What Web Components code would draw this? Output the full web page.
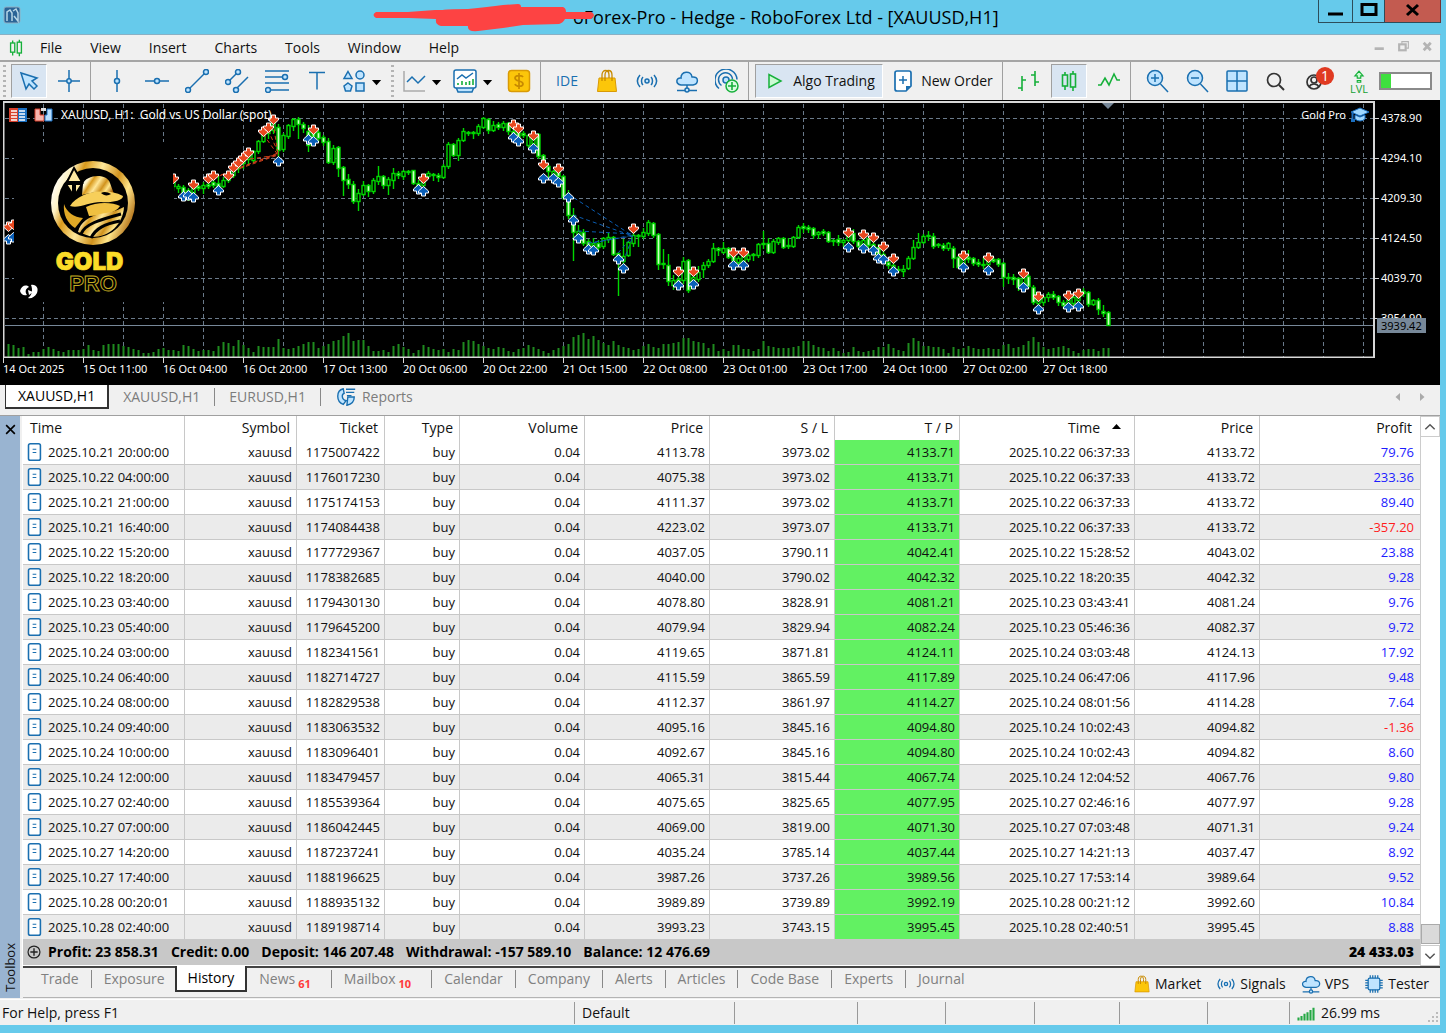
<!DOCTYPE html>
<html lang="en">
<head>
	<meta charset="utf-8">
	<title>RoboForex Ltd - [XAUUSD,H1]</title>
	<meta name="viewport" content="width=device-width">
</head>
<style type="text/css">
	body, html {
		margin:0;
		font-family:"Open Sans", "Noto Sans", sans-serif;
		font-size:14px;
		line-height:20px;
		color:#111;
		background-color:#66caeb;
	}
</style>
<body>

<terminal-window>
	<title-bar slot="title">oForex-Pro - Hedge - RoboForex Ltd - [XAUUSD,H1]</title-bar>
	<menu-bar slot="menu"></menu-bar>
	<tool-bar slot="tools"></tool-bar>
	<price-chart></price-chart>
	<chart-tabs></chart-tabs>
	<toolbox-panel>
		<history-table></history-table>
		<toolbox-tabs slot="tabs"></toolbox-tabs>
	</toolbox-panel>
	<status-bar slot="status"></status-bar>
</terminal-window>

</body>
<script type="text/javascript">

// all icons share a 24x24 box
const B = 'stroke="#1a6fb0" fill="none" stroke-width="1.5"'
const BF = 'stroke="#1a6fb0" fill="#bfe4ff" stroke-width="1.5"'
const G = 'stroke="#16b03a" fill="none" stroke-width="1.6"'
const icons = {
	app: `<rect x="4" y="4" width="16" height="16" rx="2" fill="#2a6496" stroke="#8fb0c4"/><path d="M7 18V9l3-2 2 3v8M13 8l3-2 2 4v8l-4-5" stroke="#b8d8e8" fill="none" stroke-width="1.500"/>`,
	candles: `<g ${G}><path d="M8 3v3M8 17v4M16 2v3M16 18v4"/><rect x="5.500" y="6" width="5" height="11"/><rect x="13.500" y="5" width="5" height="13"/></g>`,
	cursor: `<path d="M4 4l5 16 3-5 5 5 3-3-5-5 5-3z" ${BF}/>`,
	cross: `<path d="M12 1v9M12 14v9M1 12h9M14 12h9" ${B}/><circle cx="12" cy="12" r="2.200" ${BF}/>`,
	vline: `<path d="M12 1v9M12 14v9" ${B}/><circle cx="12" cy="12" r="2.500" ${BF}/>`,
	hline: `<path d="M0 12h9M15 12h9" ${B}/><circle cx="12" cy="12" r="2.500" ${BF}/>`,
	trend: `<path d="M4 20L20 4" ${B}/><circle cx="3" cy="21" r="2.500" ${BF}/><circle cx="21" cy="3" r="2.500" ${BF}/>`,
	channel: `<path d="M4 12L12 4M11 20L23 8" ${B}/><circle cx="3" cy="13" r="2.500" ${BF}/><circle cx="13" cy="3" r="2.500" ${BF}/><circle cx="11" cy="21" r="2.500" ${BF}/>`,
	fibo: `<path d="M0 2h24M0 8h18M0 14h24M5 21h19" ${B}/><circle cx="20" cy="8" r="2.500" ${BF}/><circle cx="3" cy="21" r="2.500" ${BF}/>`,
	text: `<path d="M4 3.500h16M12 3.500v17" ${B}/>`,
	shapes: `<g ${BF}><path d="M6 2.500l4 7H2z"/><circle cx="18" cy="6" r="4"/><path d="M6 14l4 3-1.500 5h-5L2 17z"/><rect x="14" y="14" width="8" height="8"/></g>`,
	caret: `<path d="M6.500 11h10l-5 5.500z" fill="#000"/>`,
	line: `<path d="M2 2v20h21" stroke="#aaa" fill="none" stroke-width="1.500"/><path d="M5 13l5-5 6 6 7-7" ${B}/>`,
	monitor: `<path d="M3 18h18l-2 5H5z" fill="#bfe4ff" stroke="#1a6fb0" stroke-width="1.500"/><rect x="1" y="1" width="22" height="18" rx="2" fill="#fff" stroke="#1a6fb0" stroke-width="1.500"/><path d="M4 10l5-4 4 3 7-5" ${B}/><path d="M5 16v-2M9 16v-4M13 16v-3M16.500 16v-4M20 16v-6" ${G}/>`,
	dollar: `<rect x="1.500" y="1.500" width="21" height="21" rx="3" fill="#fcc60a" stroke="#d99a05" stroke-width="1.500"/><path d="M16 8c-1-2-8-2-8 1 0 4 8 2 8 6 0 3-7 3-8 0M12 4v16" stroke="#c88a00" fill="none" stroke-width="1.700"/>`,
	bag: `<path d="M4 9h16l1.500 13.500h-19z" fill="#fcc60a" stroke="#d99a05"/><path d="M7 12V6c0-6 7-6 7 0v3M10 12V6c0-6 7-6 7 0v6" stroke="#c88a00" fill="none" stroke-width="1.300"/>`,
	signals: `<circle cx="12" cy="12" r="2" ${BF}/><path d="M8 8c-2 2-2 6 0 8M16 8c2 2 2 6 0 8M5 6c-3.500 4-3.500 8 0 12M19 6c3.500 4 3.500 8 0 12" ${B}/>`,
	cloud: `<path d="M6 16c-6-1-5-8 0-7 0-7 10-8 11-1 7-1 7 7 1 8z" ${BF}/><path d="M12 16v4M2 21.500h8M14 21.500h8" ${B}/><circle cx="12" cy="21" r="2" ${BF}/>`,
	radar: `<circle cx="11" cy="11" r="3" ${BF}/><path d="M6.500 16.500a7 7 0 1 1 11-6M4 19.500a11 11 0 1 1 18-9" ${B}/><circle cx="17" cy="17" r="6" fill="#d9fbe0" stroke="#16b03a" stroke-width="1.500"/><path d="M17 13v8M13 17h8" ${G}/>`,
	play: `<path d="M6 5.500v13L18 12z" fill="#cdfad5" stroke="#16b03a" stroke-width="1.500"/>`,
	neworder: `<path d="M6 2h12q2 0 2 2v13l-5 5H6q-2 0-2-2V4q0-2 2-2z" fill="#fff" stroke="#1a6fb0" stroke-width="1.700"/><path d="M15 22v-5h5z" fill="#1a6fb0"/><path d="M12 7v8M8 11h8" stroke="#1a6fb0" stroke-width="1.500"/>`,
	bars: `<path d="M5 7v15M1 19h4M5 11h4M18 2v15M14 6h4M18 13h4" ${G}/>`,
	zigzag: `<path d="M1 16h3l4-7 4 7 5-11 3 6h3" ${G}/>`,
	zoomin: `<circle cx="10" cy="9" r="7.500" ${BF}/><path d="M15.500 15L23 23M10 5v8M6 9h8" ${B}/>`,
	zoomout: `<circle cx="10" cy="9" r="7.500" ${BF}/><path d="M15.500 15L23 23M6 9h8" ${B}/>`,
	tiles: `<rect x="2" y="2" width="20" height="20" rx="1" ${BF}/><path d="M12 2v20M2 12h20" ${B}/>`,
	search: `<circle cx="11" cy="11" r="6.500" stroke="#333" fill="none" stroke-width="1.700"/><path d="M16 16l5 5" stroke="#333" stroke-width="2"/>`,
	person: `<g stroke="#333" fill="none" stroke-width="1.700"><circle cx="10" cy="13" r="7"/><circle cx="10" cy="11" r="3"/><path d="M5 18c2-4 8-4 10 0"/></g>`,
	level: `<path d="M12 2l7 8h-4v4H9v-4H5zM9 18h6v3H9z" stroke="#16b03a" fill="#cdfad5" stroke-width="2"/>`,
	doc: `<rect x="6" y="3" width="13" height="18" rx="2" fill="#fff" stroke="#1a6fb0" stroke-width="1.700"/><path d="M10.500 9h4M10.500 12.500h4" stroke="#1a6fb0" stroke-width="1.200"/>`,
	plus: `<circle cx="12" cy="12" r="6.500" fill="none" stroke="#222" stroke-width="1.300"/><path d="M12 8v8M8 12h8" stroke="#222" stroke-width="1.500"/>`,
	reports: `<path d="M9 3C1 5 1 17 9 20l3-4C7 15 7 9 10 8zM14 12h7c0 5-3 8-8 9z" ${BF}/><path d="M12 3.500h10M12 7h9M13 10.500h5" ${B}/>`,
	chip: `<rect x="5" y="5" width="14" height="14" rx="2" ${BF}/><path d="M7.500 5V1.500M10.500 5V1.500M13.500 5V1.500M16.500 5V1.500M7.500 22.500V19M10.500 22.500V19M13.500 22.500V19M16.500 22.500V19M5 7.500H1.500M5 10.500H1.500M5 13.500H1.500M5 16.500H1.500M22.500 7.500H19M22.500 10.500H19M22.500 13.500H19M22.500 16.500H19" ${B}/>`,
	connection: `<path d="M2 22v-4M6 22v-6M10 22v-9M14 22V11M18 22V8M22 22V5" stroke="#25a844" stroke-width="2.800"/>`,
	min: `<path d="M4 15h15" stroke="currentColor" stroke-width="3"/>`,
	max: `<rect x="5" y="5.500" width="14" height="10" fill="none" stroke="currentColor" stroke-width="3"/>`,
	restore: `<path d="M9 7V3h12v12h-4" fill="none" stroke="currentColor" stroke-width="2"/><rect x="4" y="8" width="12" height="11" fill="none" stroke="currentColor" stroke-width="4"/>`,
	close: `<path d="M6 6l11 10M17 6L6 16" stroke="currentColor" stroke-width="3"/>`,
	smallmin: `<path d="M3 16h17" stroke="currentColor" stroke-width="5"/>`,
	smallclose: `<path d="M5 5l13 14M18 5L5 19" stroke="currentColor" stroke-width="5"/>`,
	thinclose: `<path d="M4 4l16 16M20 4L4 20" stroke="currentColor" stroke-width="3"/>`,
	up: `<path d="M4 16l8-8 8 8" fill="none" stroke="#555" stroke-width="2.500"/>`,
	down: `<path d="M4 8l8 8 8-8" fill="none" stroke="#555" stroke-width="2.500"/>`,
	left: `<path d="M16 4v16l-9-8z" fill="#aaa"/>`,
	right: `<path d="M8 4v16l9-8z" fill="#aaa"/>`
}

customElements.define('mt-icon', class extends HTMLElement{
	constructor() {
		super();
		this.attachShadow({mode:'open'})
	}
	connectedCallback() {
		const size = this.getAttribute('size') || 24
		this.shadowRoot.innerHTML=`
		<style>
		:host { display:inline-flex; flex:none; }
		svg { display:block; }
		</style>
		<svg width="${size}" height="${size}" viewBox="0 0 24 24" aria-hidden="true">${icons[this.getAttribute('name')]}</svg>
		`
	}
})

customElements.define('terminal-window', class extends HTMLElement{
	constructor() {
		super();
		this.attachShadow({mode:'open'}).innerHTML=`
		<style>
		:host {
			display:block;
			padding:0 6px 8px 0;
			background-color:#66caeb;
		}
		main { background-color:#f0f0f0; }
		</style>
		<slot name="title"></slot>
		<main>
			<slot name="menu"></slot>
			<slot name="tools"></slot>
			<slot></slot>
			<slot name="status"></slot>
		</main>
		`
	}
})

customElements.define('title-bar', class extends HTMLElement{
	constructor() {
		super();
		this.attachShadow({mode:'open'}).innerHTML=`
		<style>
		:host {
			display:flex;
			align-items:flex-start;
			height:34px;
			border-bottom:1px solid #8ab0c4;
			margin-right:-1px;
			color:#000;
		}
		mt-icon[name=app] { margin:3px 0 0 0; }
		h1 {
			position:relative;
			flex:1;
			margin:0;
			padding:4px 0 0 549px;
			font-size:18px;
			line-height:26px;
			font-weight:400;
			white-space:nowrap;
		}
		h1 svg {
			position:absolute;
			left:349px;
			top:2px;
		}
		button {
			display:flex;
			justify-content:center;
			align-items:center;
			box-sizing:border-box;
			width:34px;
			height:23px;
			padding:0;
			border:1px solid #2d4d5a;
			border-top:none;
			border-right:none;
			background:none;
			color:#000;
		}
		.restore { width:32px; }
		.close {
			width:57px;
			border-right:1px solid #733;
			background-color:#c35b50;
		}
		</style>
		<mt-icon name="app"></mt-icon>
		<h1><slot></slot>
			<svg width="224" height="30" aria-hidden="true"><path d="M3 10H35L62 8H70Q72 7 95 7Q115 5 130 3L145 2Q148 2 148 5H190Q193 6 193 10H218Q224 13 218 17H192Q190 21 186 22L150 23L130 26L105 29Q94 30 95 24H68Q62 23 63 17L36 16H3Q-2 13 3 10z" fill="#fd4343"/></svg>
		</h1>
		<button aria-label="Minimize"><mt-icon name="min"></mt-icon></button>
		<button class="restore" aria-label="Restore"><mt-icon name="max"></mt-icon></button>
		<button class="close" aria-label="Close"><mt-icon name="close"></mt-icon></button>
		`
	}
})

customElements.define('menu-bar', class extends HTMLElement{
	constructor() {
		super();
		this.attachShadow({mode:'open'}).innerHTML=`
		<style>
		:host {
			display:flex;
			align-items:center;
			height:25px;
			padding-right:1px;
			border-bottom:2px solid #a5a5a5;
		}
		mt-icon[name=candles] { margin:0 14px 0 6px; }
		nav { display:flex; flex:1; }
		button {
			padding:0;
			border:none;
			background:none;
			font:inherit;
			color:inherit;
		}
		nav button { margin-right:28px; }
		.win { width:24px; color:#b4b4b4; }
		</style>
		<mt-icon name="candles" size="20"></mt-icon>
		<nav>${['File','View','Insert','Charts','Tools','Window','Help'].map(t => `<button>${t}</button>`).join('')}</nav>
		<button class="win" aria-label="Minimize chart"><mt-icon name="smallmin" size="13"></mt-icon></button>
		<button class="win" aria-label="Restore chart"><mt-icon name="restore" size="13"></mt-icon></button>
		<button class="win" aria-label="Close chart"><mt-icon name="smallclose" size="13"></mt-icon></button>
		`
	}
})

customElements.define('tool-button', class extends HTMLElement{
	constructor() {
		super();
		this.attachShadow({mode:'open'}).innerHTML=`
		<style>
		:host {
			display:block;
			flex:none;
			width:40px;
			height:34px;
		}
		:host([drop]) { width:51px; }
		:host([narrow]) { width:36px; }
		:host([wide]) { width:46px; }
		:host([label]) { width:118px; }
		:host([label][active]) { width:128px; }
		button {
			position:relative;
			display:flex;
			align-items:center;
			justify-content:center;
			gap:6px;
			box-sizing:border-box;
			width:36px;
			height:34px;
			margin:0 2px;
			padding:0;
			border:1px solid transparent;
			background:none;
			font:inherit;
			color:inherit;
			white-space:nowrap;
		}
		:host([drop]) button { width:auto; gap:0; padding-left:2px; }
		:host([narrow]) button { width:32px; }
		:host([wide]) button { width:42px; }
		:host([label]) button { width:100%; margin:0; }
		:host([active]) button {
			background-color:#d9e5f2;
			border-color:#a0a0a0 #fff #fff #a0a0a0;
		}
		:host([blue]) button { color:#1a6fb0; }
		</style>
		<button><slot></slot></button>
		`
	}
})

customElements.define('tool-bar', class extends HTMLElement{
	constructor() {
		super();
		const btn = (name, attr) => `<tool-button ${attr || ''} aria-label="${name}"><mt-icon name="${name}"></mt-icon></tool-button>`
		const drop = name => `<tool-button drop aria-label="${name}"><mt-icon name="${name}"></mt-icon><mt-icon name="caret" size="22"></mt-icon></tool-button>`
		this.attachShadow({mode:'open'}).innerHTML=`
		<style>
		:host {
			display:flex;
			align-items:center;
			height:38px;
			overflow:hidden;
		}
		i {
			flex:none;
			width:3px;
			height:32px;
			margin:0 3px;
			background:repeating-linear-gradient(#b4b4b4 0 2px, transparent 2px 5px);
		}
		hr {
			flex:none;
			width:1px;
			height:100%;
			margin:0 6px 0 1px;
			border:none;
			background-color:#a0a0a0;
		}
		.badge {
			position:absolute;
			left:20px;
			top:2px;
			width:18px;
			border-radius:9px;
			background-color:#e03a22;
			color:#fff;
			line-height:18px;
			text-align:center;
		}
		.lvl {
			display:flex;
			flex-direction:column;
			align-items:center;
			font-size:11px;
			line-height:9px;
			color:#16a035;
		}
		.level {
			box-sizing:border-box;
			width:53px;
			height:18px;
			border:2px solid #8a8a8a;
			background:linear-gradient(#3ee03e, #3ee03e) no-repeat 0 0 / 10px 100% #fff;
		}
		</style>
		<i></i>
		${btn('cursor', 'active')}${btn('cross')}<hr>
		${['vline','hline','trend','channel','fibo','text'].map(n => btn(n)).join('')}${drop('shapes')}
		<i></i>
		${drop('line')}${drop('monitor')}${btn('dollar')}<hr>
		<tool-button blue>IDE</tool-button>
		${['bag','signals','cloud','radar'].map(n => btn(n)).join('')}<hr>
		<tool-button label active><mt-icon name="play"></mt-icon>Algo Trading</tool-button>
		<tool-button label><mt-icon name="neworder"></mt-icon>New Order</tool-button><hr>
		${btn('bars')}${btn('candles', 'active')}${btn('zigzag')}<hr>
		${btn('zoomin')}${btn('zoomout')}${btn('tiles')}${btn('search', 'narrow')}
		<tool-button wide><mt-icon name="person"></mt-icon><span class="badge">1</span></tool-button>
		<tool-button><span class="lvl"><mt-icon name="level" size="14"></mt-icon>LVL</span></tool-button>
		<div class="level" role="meter" aria-label="Level" aria-valuenow="20" aria-valuemin="0" aria-valuemax="100"></div>
		`
	}
})

// one candle each 5px from x=173: high, top, bottom, low, then 1 for a falling bar
const candles = [
	[176,180,186,190,0],[184,186,188,192,0],[185,187,194,196,1],[188,190,196,200,0],[180,187,192,196,0],[184,186,188,190,1],[182,185,188,193,0],[179,184,186,188,1],[178,182,185,187,1],[176,183,187,190,1],
	[177,180,186,187,0],[174,176,180,182,0],[163,168,175,177,0],[160,163,168,172,0],[155,158,163,168,0],[150,153,159,164,0],[150,151,160,162,0],[140,141,151,153,0],[131,134,141,142,0],[125,128,133,138,0],
	[118,122,130,133,0],[124,127,150,158,1],[133,135,149,151,0],[124,125,136,138,0],[118,119,126,130,0],[117,119,124,138,1],[122,124,128,132,1],[125,131,145,151,1],[128,132,136,141,1],[129,132,138,141,1],
	[135,137,142,145,1],[138,141,162,163,1],[145,148,162,164,0],[146,147,168,176,1],[166,167,180,195,1],[174,179,184,188,1],[181,184,201,203,1],[189,193,201,210,0],[181,185,194,195,0],[184,185,191,196,1],
	[178,180,191,193,0],[166,176,181,184,0],[175,176,185,188,1],[177,179,185,194,0],[168,173,180,188,0],[171,173,175,178,1],[170,171,176,179,0],[170,171,172,174,0],[170,170,183,184,1],[180,183,190,192,1],
	[176,180,185,190,0],[171,173,176,178,0],[173,174,175,180,0],[173,175,177,181,1],[164,166,177,178,0],[142,144,166,168,0],[143,144,155,156,1],[138,140,155,160,0],[128,131,140,141,0],[131,132,133,135,1],
	[131,132,133,138,0],[124,126,133,135,0],[117,118,127,128,0],[118,119,130,133,1],[121,125,130,131,0],[122,124,127,129,1],[121,123,127,130,0],[122,123,131,134,1],[128,131,135,138,1],[128,132,137,140,1],
	[131,133,135,137,1],[134,135,145,147,0],[132,138,143,148,0],[133,134,156,158,1],[154,155,165,168,1],[164,166,171,177,1],[170,171,175,180,0],[168,172,176,180,1],[175,176,197,199,1],[190,197,215,218,1],
	[208,215,232,260,1],[225,231,238,240,0],[229,232,243,245,1],[239,241,245,249,1],[238,243,245,249,0],[240,243,247,250,1],[237,238,246,248,0],[233,237,239,242,0],[236,237,254,255,1],[252,253,260,295,1],
	[239,256,261,264,0],[241,242,255,256,0],[232,235,243,246,0],[234,235,236,246,1],[228,232,236,238,0],[220,222,233,235,0],[222,223,235,237,1],[233,234,264,269,1],[249,263,264,268,1],[254,265,281,285,1],
	[275,280,285,289,0],[272,279,283,287,1],[257,261,280,283,0],[259,260,290,292,1],[273,277,282,288,0],[266,272,279,281,0],[262,265,269,277,0],[259,261,265,267,0],[243,248,261,262,0],[247,248,250,255,1],
	[242,248,252,253,0],[247,248,257,258,1],[252,255,260,263,1],[256,258,262,266,0],[252,256,261,264,0],[252,255,259,261,0],[253,254,255,260,1],[243,244,255,257,0],[231,243,244,248,0],[238,243,252,253,1],
	[239,241,252,253,0],[237,238,242,244,0],[237,238,247,248,1],[238,245,246,248,0],[236,237,246,247,0],[225,227,237,238,0],[223,226,228,232,1],[225,227,229,232,1],[227,228,235,238,1],[231,232,234,238,0],
	[229,231,233,235,1],[231,232,241,242,1],[239,240,241,245,0],[235,239,242,245,1],[239,240,242,246,0],[230,236,240,244,0],[229,233,241,243,1],[240,241,246,248,1],[236,240,244,247,0],[237,238,245,247,1],
	[240,244,247,252,1],[244,247,255,258,1],[246,254,259,262,1],[259,262,265,268,1],[262,265,269,273,0],[266,269,270,272,1],[265,269,271,276,0],[256,258,268,269,0],[240,247,258,259,0],[233,242,247,248,0],
	[234,236,242,243,0],[231,235,236,240,0],[233,236,246,248,1],[243,244,245,247,0],[243,245,248,250,1],[242,243,248,250,0],[246,248,258,267,1],[255,257,267,268,1],[255,258,265,268,0],[250,257,259,262,1],
	[257,258,263,265,1],[259,262,264,266,1],[257,264,265,268,1],[256,259,264,267,0],[257,259,261,262,1],[258,259,264,266,1],[262,263,277,286,1],[273,277,278,283,0],[274,277,279,284,1],[277,278,287,290,1],
	[274,278,284,288,0],[274,276,286,288,1],[285,287,302,304,1],[296,300,303,306,0],[296,297,302,305,0],[292,294,297,301,0],[291,294,297,299,1],[295,296,302,305,1],[300,302,305,308,1],[298,300,305,309,0],
	[295,297,303,306,0],[291,294,300,304,0],[288,291,293,296,0],[291,292,304,306,1],[299,300,304,305,0],[298,300,309,314,1],[305,311,313,316,1],[311,312,325,325,1]
]
// tick volume, one bar each 5px from x=8
const volume = [
	13,12,9,10,3,5,5,8,10,8,6,5,7,7,7,8,12,7,6,12,13,13,13,11,10,8,7,4,4,5,8,9,7,7,6,12,11,8,6,7,7,6,11,15,14,11,17,12,9,5,11,10,10,10,18,9,8,9,11,13,15,15,9,11,13,16,17,21,24,16,17,17,11,6,6,7,5,11,13,10,8,4,7,12,10,8,7,8,5,8,7,15,17,16,13,11,9,8,10,9,6,5,8,9,12,10,8,6,4,7,9,11,13,20,22,24,18,21,17,14,12,16,12,10,9,7,8,11,13,10,9,
	13,13,14,15,19,19,16,15,14,9,13,6,8,6,12,12,8,8,6,8,16,11,10,9,9,9,10,11,16,16,12,10,9,6,9,6,4,5,10,6,5,6,7,10,10,13,9,7,6,14,19,16,11,11,10,10,8,4,10,8,9,11,9,8,8,9,8,8,12,13,9,10,12,16,20,15,10,8,9,10,11,9,6,4,7,8,8,6,9,9
].slice(0, 221)
const sells = [[8,226],[13,224],[173,178],[193,184],[208,178],[213,175],[228,175],[233,167],[238,162],[243,157],[248,152],[263,131],[268,127],[273,119],[313,129],[423,178],[513,124],[518,128],[533,135],[543,164],[558,168],[633,228],[678,271],[693,271],[733,252],[743,252],[848,232],[863,234],[873,237],[883,246],[893,258],[963,255],[988,257],[1023,273],[1038,296],[1068,295],[1078,293]]
const buys = [[8,239],[13,237],[183,196],[188,195],[193,197],[218,190],[278,161],[308,139],[313,141],[418,189],[423,191],[513,137],[518,141],[533,148],[543,178],[553,178],[558,182],[568,197],[573,220],[578,238],[588,249],[593,250],[618,259],[623,268],[678,285],[693,284],[733,265],[743,265],[848,247],[863,248],[873,250],[878,258],[883,259],[893,271],[963,267],[988,270],[1023,287],[1038,309],[1068,307],[1078,306]]

function drawPlot() {
	let grid = '', bars = '', vol = ''
	for (let x = 43; x < 3000; x += 40) grid += `M${x}.5 104V357`
	for (let y = 118; y < 330; y += 40) grid += `M5 ${y}.5H3000`
	candles.forEach(([h, t, b, l, fall], i) => {
		const x = 173 + i * 5
		bars += `<path d="M${x+.5} ${h}V${t}M${x+.5} ${b}V${l+1}"/><rect x="${x-1}" y="${t+.5}" width="3" height="${Math.max(b-t,1)}" fill="${fall ? '#d4ffc8' : '#000'}"/>`
	})
	volume.forEach((v, i) => { vol += `M${8.5 + i*5} 357v-${v}` })
	const arrow = (list, d, fill) => list.map(([x, y]) => `<path transform="translate(${x+.5} ${y+.5})" d="${d}" fill="${fill}"/>`).join('')
	return `
	<path d="${grid}" stroke="#6a7a8a" stroke-dasharray="4 3" fill="none"/>
	<path d="${vol}" stroke="#1f8a1f" stroke-width="2"/>
	<path d="M5 325.500H3000" stroke="#778899"/>
	<path d="M1102 103h12l-6 6z" fill="#778899"/>
	<g stroke="#00d800" stroke-width="1.400">${bars}</g>
	<g stroke="#d0401c" stroke-dasharray="4 3" fill="none"><path d="M208 180L278 153M213 178L278 155M233 170L278 154M243 160L278 155M263 134L278 155M268 130L278 152M273 122L278 154"/></g>
	<g stroke="#0a5cb0" stroke-dasharray="4 3" fill="none"><path d="M568 194L633 236M573 215L633 236M578 231L633 234M588 243L633 236M593 243L633 235M618 253L633 236M623 262L633 236"/></g>
	<rect x="14" y="142" width="160" height="160" fill="#000"/>
	<g stroke="#fff" stroke-width="1">
	${arrow(sells, 'M-2 -4.500h4v3h3v2l-5 4.500l-5 -4.500v-2h3z', '#e8481f')}
	${arrow(buys, 'M-2 4.500h4v-3h3v-2l-5 -4.500l-5 4.500v2h3z', '#0a5fb8')}
	</g>
	<rect x="14" y="215" width="10" height="35" fill="#000"/>
	<rect x="160" y="170" width="13" height="20" fill="#000"/>`
}

const logo = `
	<defs><linearGradient id="gold" x1="0" y1="0.300" x2="1" y2="0.700">
		<stop offset="0" stop-color="#fff"/><stop offset="0.140" stop-color="#fff3c4"/><stop offset="0.260" stop-color="#d99a1c"/>
		<stop offset="0.450" stop-color="#ffe89a"/><stop offset="0.650" stop-color="#d0921d"/><stop offset="0.800" stop-color="#ffe68a"/><stop offset="1" stop-color="#a8620a"/>
	</linearGradient></defs>
	<circle cx="93" cy="203" r="42" fill="url(#gold)"/>
	<circle cx="93" cy="203" r="35" fill="#000"/>
	<path d="M83 184c2-9 24-12 27-1l4 11c-10-4-21-2-32 1z" fill="url(#gold)"/>
	<path d="M70 206c8-13 34-20 53-10 0 5-13 7-22 6-12 0-22 7-31 4z" fill="#f7cf5a"/>
	<path d="M101 193c3-2 7-1 10 1-3 2-7 2-10-1z" fill="#000"/>
	<path d="M86 207c10-5 26-5 34-1-4 7-18 10-31 10z" fill="#f0c040"/>
	<path d="M78 232c2-10 12-16 22-18 8-1 16-3 24-7-1 17-14 30-32 30z" fill="url(#gold)"/>
	<path d="M64 204c3 9 10 13 19 14l-8 10c-8-5-12-14-11-24z" fill="#e0a826"/>
	<path d="M81 234c4-10 18-14 40-20M91 238c5-10 14-14 29-17M76 211c4 4 8 5 12 5" stroke="#000" fill="none" stroke-width="3"/>
	<path d="M74 168l8 14H67zM66 184l7 11v-11zM75 184h7l-7 11z" fill="#ffe9a0" stroke="#000" stroke-width="2"/>
	<text x="89.500" y="270" font-family="Inter, 'Liberation Sans', sans-serif" font-weight="900" font-size="24" text-anchor="middle" fill="#fcdc28" stroke="#fcdc28" stroke-width="0.700">GOLD</text>
	<text x="93" y="291" font-family="'Liberation Sans', sans-serif" font-weight="700" font-size="22" text-anchor="middle" fill="none" stroke="#c4ac20">PRO</text>
	<path d="M20 291c1-5 6-7 9-4-4 2-4 5-2 8-4 1-6-1-7-4zM31 285c5-1 8 3 6 8-2 4-6 6-9 5 4-3 5-8 3-13z" fill="#fff"/>
	<path d="M28 290l5 2-4 3z" fill="#fff"/>`

customElements.define('price-chart', class extends HTMLElement{
	constructor() {
		super();
		this.attachShadow({mode:'open'}).innerHTML=`
		<style>
		:host {
			position:relative;
			display:grid;
			grid-template-columns:1fr 65px;
			height:285px;
			background-color:#000;
			color:#fff;
			font-family:"Noto Sans", sans-serif;
			font-size:11px;
			line-height:16px;
		}
		.plot {
			width:100%;
			height:258px;
			display:block;
		}
		.frame { fill:none; stroke:#d8d8d8; stroke-width:2px; }
		.prices {
			display:flex;
			flex-direction:column;
			gap:24px;
			padding-top:10px;
		}
		.prices span { display:flex; align-items:center; gap:2px; }
		.prices span::before {
			content:"";
			width:4px;
			height:1px;
			background-color:#d8d8d8;
		}
		.now {
			position:absolute;
			right:14px;
			top:218px;
			width:49px;
			box-sizing:border-box;
			padding-left:4px;
			line-height:15px;
			background-color:#778899;
			color:#000;
		}
		.times {
			grid-column:1 / 3;
			display:flex;
			height:27px;
			padding-left:3px;
			overflow:hidden;
		}
		.times span {
			flex:none;
			width:80px;
			box-sizing:border-box;
			padding-top:3px;
			white-space:nowrap;
			background:linear-gradient(#d8d8d8, #d8d8d8) no-repeat 0 0 / 1px 5px;
		}
		.name, .expert {
			position:absolute;
			top:7px;
			display:flex;
			align-items:center;
			gap:7px;
			white-space:pre;
		}
		.name { left:9px; font-size:12px; }
		.expert { right:71px; gap:5px; }
		</style>
		<svg class="plot">
			<g transform="translate(0 -100)">${drawPlot()}${logo}</g>
			<path class="frame" d="M3.500 258V2H3000M0 257.500H3000"/>
			<path d="M0 0h3v258H0z" fill="#000"/>
			<svg x="100%" overflow="visible"><path class="frame" d="M-1 1V258"/></svg>
		</svg>
		<div class="prices">${['4378.90','4294.10','4209.30','4124.50','4039.70','3954.90'].map(p => `<span>${p}</span>`).join('')}</div>
		<div class="times">${['14 Oct 2025','15 Oct 11:00','16 Oct 04:00','16 Oct 20:00','17 Oct 13:00','20 Oct 06:00','20 Oct 22:00','21 Oct 15:00','22 Oct 08:00','23 Oct 01:00','23 Oct 17:00','24 Oct 10:00','27 Oct 02:00','27 Oct 18:00'].map(t => `<span>${t}</span>`).join('')}</div>
		<div class="now">3939.42</div>
		<div class="name">
			<svg width="18" height="14"><path d="M0 0h9v14H0z" fill="#d8402c"/><path d="M9 0h9v14H9z" fill="#1a6fc0"/><path d="M2 3h6M2 6h6M2 9h6M2 12h6M10 3h6M10 6h6M10 9h6M10 12h6" stroke="#fff" stroke-width="1.600"/></svg>
			<svg width="20" height="14"><path d="M1 1h5v6h4v6H1z" fill="#f6b5ad" stroke="#d8402c"/><path d="M18 1h-5v6h-2v6h7z" fill="#b8deff" stroke="#1a6fc0"/><path d="M7 0h5v3H7z" fill="#ddd"/></svg>
			<span>XAUUSD, H1:  Gold vs US Dollar (spot)</span>
		</div>
		<div class="expert"><span>Gold Pro</span>
			<svg width="18" height="16"><path d="M9 1l9 4-9 4-9-4z" fill="#9fd8ff" stroke="#1a6fc0"/><path d="M4 8v4q5 4 10 0V8l-5 2z" fill="#9fd8ff" stroke="#1a6fc0"/><path d="M1.500 5v7" stroke="#1a6fc0" stroke-width="2"/><path d="M0 12h4v3H0z" fill="#1a6fc0"/></svg>
		</div>
		`
	}
})

customElements.define('chart-tabs', class extends HTMLElement{
	constructor() {
		super();
		this.attachShadow({mode:'open'}).innerHTML=`
		<style>
		:host {
			display:flex;
			align-items:flex-start;
			height:30px;
			padding:0 6px 0 5px;
			border-bottom:1px solid #a0a0a0;
		}
		nav { display:flex; flex:1; align-items:flex-start; }
		button {
			display:flex;
			align-items:center;
			gap:5px;
			height:24px;
			padding:0 14px;
			border:none;
			background:none;
			font:inherit;
			color:#7c7c7c;
		}
		nav button + button + button { border-left:1px solid #888; height:18px; margin-top:3px; }
		.on {
			padding:0 12px;
			border:1px solid #333;
			border-width:0 2px 2px 1px;
			background-color:#fff;
			color:#000;
		}
		.step { padding:0 6px; }
		</style>
		<nav>
			<button class="on">XAUUSD,H1</button>
			<button>XAUUSD,H1</button>
			<button>EURUSD,H1</button>
			<button><mt-icon name="reports" size="22"></mt-icon>Reports</button>
		</nav>
		<button class="step" aria-label="Previous"><mt-icon name="left" size="12"></mt-icon></button>
		<button class="step" aria-label="Next"><mt-icon name="right" size="12"></mt-icon></button>
		`
	}
})

customElements.define('toolbox-panel', class extends HTMLElement{
	constructor() {
		super();
		this.attachShadow({mode:'open'}).innerHTML=`
		<style>
		:host {
			display:grid;
			grid-template-columns:20px 1fr;
			column-gap:2px;
		}
		aside {
			display:flex;
			flex-direction:column;
			justify-content:space-between;
			align-items:center;
			padding:7px 0 6px;
			background-color:#99b4d1;
		}
		aside button { display:flex; padding:0; border:none; background:none; color:#000; }
		aside span {
			writing-mode:vertical-rl;
			transform:rotate(180deg);
			font-size:13px;
		}
		.body { display:grid; grid-template-columns:1fr 20px; background-color:#fff; }
		.scroll {
			display:flex;
			flex-direction:column;
			justify-content:flex-end;
			border-left:1px solid #ccc;
		}
		.scroll button {
			display:flex;
			align-items:center;
			justify-content:center;
			height:21px;
			padding:0;
			border:1px solid #ccc;
			border-left:none;
			background-color:#fff;
		}
		.scroll button:first-child { margin-bottom:auto; }
		.thumb { height:18px; margin-bottom:1px; border:1px solid #aaa; background-color:#dadada; }
		</style>
		<aside>
			<button aria-label="Close toolbox"><mt-icon name="thinclose" size="13"></mt-icon></button>
			<span>Toolbox</span>
		</aside>
		<section>
			<div class="body">
				<slot></slot>
				<div class="scroll">
					<button aria-label="Scroll up"><mt-icon name="up" size="14"></mt-icon></button>
					<div class="thumb"></div>
					<button aria-label="Scroll down"><mt-icon name="down" size="14"></mt-icon></button>
				</div>
			</div>
			<slot name="tabs"></slot>
		</section>
		`
	}
})

const deals = `
2025.10.21 20:00:00|1175007422|4113.78|3973.02|4133.71|2025.10.22 06:37:33|4133.72|79.76
2025.10.22 04:00:00|1176017230|4075.38|3973.02|4133.71|2025.10.22 06:37:33|4133.72|233.36
2025.10.21 21:00:00|1175174153|4111.37|3973.02|4133.71|2025.10.22 06:37:33|4133.72|89.40
2025.10.21 16:40:00|1174084438|4223.02|3973.07|4133.71|2025.10.22 06:37:33|4133.72|-357.20
2025.10.22 15:20:00|1177729367|4037.05|3790.11|4042.41|2025.10.22 15:28:52|4043.02|23.88
2025.10.22 18:20:00|1178382685|4040.00|3790.02|4042.32|2025.10.22 18:20:35|4042.32|9.28
2025.10.23 03:40:00|1179430130|4078.80|3828.91|4081.21|2025.10.23 03:43:41|4081.24|9.76
2025.10.23 05:40:00|1179645200|4079.94|3829.94|4082.24|2025.10.23 05:46:36|4082.37|9.72
2025.10.24 03:00:00|1182341561|4119.65|3871.81|4124.11|2025.10.24 03:03:48|4124.13|17.92
2025.10.24 06:40:00|1182714727|4115.59|3865.59|4117.89|2025.10.24 06:47:06|4117.96|9.48
2025.10.24 08:00:00|1182829538|4112.37|3861.97|4114.27|2025.10.24 08:01:56|4114.28|7.64
2025.10.24 09:40:00|1183063532|4095.16|3845.16|4094.80|2025.10.24 10:02:43|4094.82|-1.36
2025.10.24 10:00:00|1183096401|4092.67|3845.16|4094.80|2025.10.24 10:02:43|4094.82|8.60
2025.10.24 12:00:00|1183479457|4065.31|3815.44|4067.74|2025.10.24 12:04:52|4067.76|9.80
2025.10.27 02:40:00|1185539364|4075.65|3825.65|4077.95|2025.10.27 02:46:16|4077.97|9.28
2025.10.27 07:00:00|1186042445|4069.00|3819.00|4071.30|2025.10.27 07:03:48|4071.31|9.24
2025.10.27 14:20:00|1187237241|4035.24|3785.14|4037.44|2025.10.27 14:21:13|4037.47|8.92
2025.10.27 17:40:00|1188196625|3987.26|3737.26|3989.56|2025.10.27 17:53:14|3989.64|9.52
2025.10.28 00:20:01|1188935132|3989.89|3739.89|3992.19|2025.10.28 00:21:12|3992.60|10.84
2025.10.28 02:40:00|1189198714|3993.23|3743.15|3995.45|2025.10.28 02:40:51|3995.45|8.88`.trim().split('\n').map(r => r.split('|'))

customElements.define('history-table', class extends HTMLElement{
	constructor() {
		super();
		this.attachShadow({mode:'open'}).innerHTML=`
		<style>
		:host { display:block; padding-left:1px; }
		table {
			width:100%;
			table-layout:fixed;
			border-collapse:separate;
			border-spacing:0;
		}
		th, td {
			box-sizing:border-box;
			padding:0 4px 0 0;
			border-right:1px solid #c8c8c8;
			text-align:right;
			white-space:nowrap;
		}
		th { height:24px; padding-right:6px; font-weight:400; }
		th:first-child { text-align:left; padding-left:7px; }
		th:last-child, td:last-child { border-right:none; padding-right:6px; }
		th:last-child { padding-right:8px; }
		td {
			height:25px;
			border-bottom:1px solid #c8c8c8;
			font-size:13px;
		}
		tr:nth-child(even) td { background-color:#ebebeb; }
		tbody tr:last-child td { height:24px; border-bottom:none; }
		tr td.tp { background-color:#62f162; }
		td.open { text-align:left; }
		td.open div { display:flex; align-items:center; gap:3px; }
		td.gain { color:#1c1cff; }
		td.loss { color:#ff1c1c; }
		th svg { margin:0 7px 4px 12px; }
		.total {
			display:flex;
			align-items:center;
			gap:12px;
			height:26px;
			padding-right:6px;
			border-bottom:1px solid #fff;
			background-color:#c8c8c8;
			font-weight:700;
			color:#000;
			white-space:nowrap;
		}
		.total mt-icon { margin-right:-9px; }
		.total b { margin-left:auto; }
		</style>
		<table>
			<colgroup>${[162,112,88,75,125,125,125,125,175,125].map(w => `<col style="width:${w}px">`).join('')}<col></colgroup>
			<thead><tr><th>Time</th><th>Symbol</th><th>Ticket</th><th>Type</th><th>Volume</th><th>Price</th><th>S / L</th><th>T / P</th><th>Time<svg width="9" height="5"><path d="M0 5h9L4.500 0z"/></svg></th><th>Price</th><th>Profit</th></tr></thead>
			<tbody>${deals.map(([open, ticket, price, sl, tp, close, out, profit]) => `
			<tr><td class="open"><div><mt-icon name="doc" size="22"></mt-icon>${open}</div></td><td>xauusd</td><td>${ticket}</td><td>buy</td><td>0.04</td><td>${price}</td><td>${sl}</td><td class="tp">${tp}</td><td>${close}</td><td>${out}</td><td class="${profit < 0 ? 'loss' : 'gain'}">${profit}</td></tr>`).join('')}</tbody>
		</table>
		<div class="total"><mt-icon name="plus" size="22"></mt-icon><span>Profit: 23 858.31</span><span>Credit: 0.00</span><span>Deposit: 146 207.48</span><span>Withdrawal: -157 589.10</span><span>Balance: 12 476.69</span><b>24 433.03</b></div>
		`
	}
})

customElements.define('toolbox-tabs', class extends HTMLElement{
	constructor() {
		super();
		this.attachShadow({mode:'open'}).innerHTML=`
		<style>
		:host {
			display:flex;
			justify-content:space-between;
			height:29px;
			margin-left:1px;
			border-top:2px solid #444;
			border-bottom:1px solid #b4b4b4;
		}
		nav { display:flex; align-items:flex-start; padding-left:6px; }
		button {
			height:18px;
			margin-top:2px;
			padding:0 12px;
			border:none;
			border-right:1px solid #888;
			background:none;
			font:inherit;
			line-height:18px;
			color:#808080;
			white-space:nowrap;
		}
		button:last-child { border-right:none; }
		.before { border-right:none; padding-right:10px; }
		.on {
			height:26px;
			margin-top:-2px;
			padding:0 11px;
			border:2px solid #333;
			border-top:none;
			background-color:#fff;
			color:#000;
		}
		b { padding:0 8px 0 3px; font-size:11px; color:#ff3b3b; vertical-align:-4px; line-height:10px; }
		div { display:flex; align-items:center; gap:15px; padding:2px 11px 0 0; }
		a { display:flex; align-items:center; gap:4px; color:#111; text-decoration:none; }
		</style>
		<nav>
			<button>Trade</button><button class="before">Exposure</button><button class="on">History</button>
			<button>News<b>61</b></button><button>Mailbox<b>10</b></button><button>Calendar</button><button>Company</button>
			<button>Alerts</button><button>Articles</button><button>Code Base</button><button>Experts</button><button>Journal</button>
		</nav>
		<div>
			<a href="#market"><mt-icon name="bag" size="18"></mt-icon>Market</a>
			<a href="#signals"><mt-icon name="signals" size="20"></mt-icon>Signals</a>
			<a href="#vps"><mt-icon name="cloud" size="20"></mt-icon>VPS</a>
			<a href="#tester"><mt-icon name="chip" size="20"></mt-icon>Tester</a>
		</div>
		`
	}
})

customElements.define('status-bar', class extends HTMLElement{
	constructor() {
		super();
		this.attachShadow({mode:'open'}).innerHTML=`
		<style>
		:host {
			display:flex;
			align-items:center;
			height:25px;
			margin-top:1px;
			border-top:1px solid #fff;
		}
		span {
			flex:none;
			box-sizing:border-box;
			height:22px;
			border-left:1px solid #999;
			padding-left:7px;
			line-height:22px;
		}
		.help { flex:1; border:none; padding-left:2px; }
		.ping { display:flex; align-items:center; gap:6px; }
		svg { align-self:flex-end; }
		</style>
		<span class="help">For Help, press F1</span>
		<span style="width:160px">Default</span>
		<span style="width:123px"></span>
		<span style="width:88px"></span>
		<span style="width:89px"></span>
		<span style="width:85px"></span>
		<span style="width:88px"></span>
		<span style="width:82px"></span>
		<span class="ping" style="width:139px"><mt-icon name="connection" size="18"></mt-icon>26.99 ms</span>
		<svg width="12" height="14" aria-hidden="true"><path d="M8 1h2v2H8zM4 5h2v2H4zM8 5h2v2H8zM0 9h2v2H0zM4 9h2v2H4zM8 9h2v2H8z" fill="#bbb"/></svg>
		`
	}
})

</script>
</html>
